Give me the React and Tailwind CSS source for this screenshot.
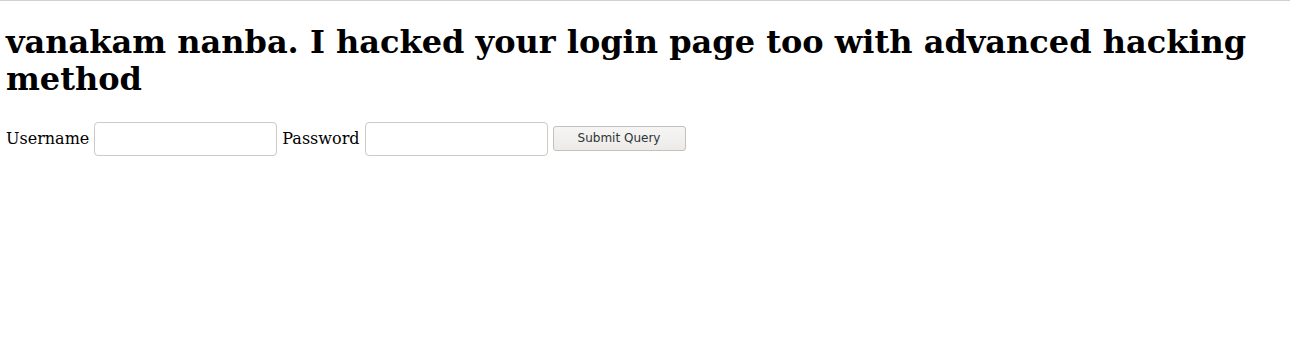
export default function App() {
  return (
    <div className="min-h-[347px] border-t border-[#d4d0cc] bg-white font-['DejaVu_Serif',serif] text-black">
      <div className="px-[6px] pt-[8px]">
        <h1 className="mt-[15px] mb-[24px] text-[32px] font-bold leading-[37px]">
          vanakam nanba. I hacked your login page too with advanced hacking method
        </h1>
        <form className="flex items-center text-[16px]" onSubmit={(e) => e.preventDefault()}>
          <label className="mr-[5px]">Username</label>
          <input className="h-[34px] w-[183px] rounded-[4px] border border-[#cdc9c5] bg-white px-2 outline-none" type="text" />
          <label className="ml-[5px] mr-[5px]">Password</label>
          <input className="h-[34px] w-[183px] rounded-[4px] border border-[#cdc9c5] bg-white px-2 outline-none" type="password" />
          <button
            className="mb-[2px] ml-[5px] h-[25px] w-[133px] rounded-[3px] border border-[#c4c0bc] bg-gradient-to-b from-[#f6f5f4] to-[#edebe9] font-['DejaVu_Sans',sans-serif] text-[12px] text-[#2e3436]"
            type="submit"
          >
            Submit Query
          </button>
        </form>
      </div>
    </div>
  )
}
